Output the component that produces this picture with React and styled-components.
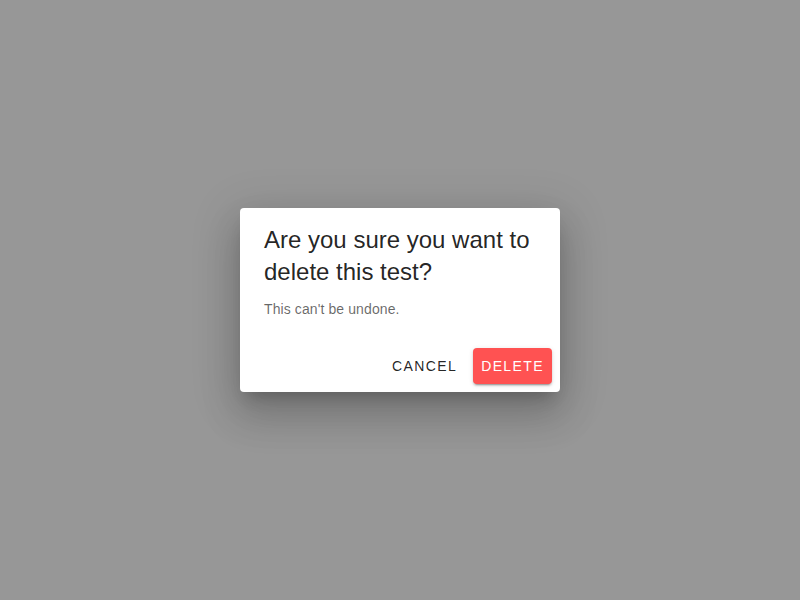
import React from "react";
import styled, { createGlobalStyle } from "styled-components";

const GlobalStyle = createGlobalStyle`
  html, body {
    margin: 0;
    height: 100%;
  }
  body {
    font-family: "Liberation Sans", Arial, sans-serif;
  }
  #root {
    height: 100%;
  }
`;

const Backdrop = styled.div`
  width: 100%;
  height: 100vh;
  background: #979797;
  display: flex;
  align-items: center;
  justify-content: center;
`;

const Dialog = styled.div`
  width: 320px;
  background: #fff;
  border-radius: 4px;
  box-shadow: 0px 11px 15px -7px rgba(0, 0, 0, 0.2),
    0px 24px 38px 3px rgba(0, 0, 0, 0.14),
    0px 9px 46px 8px rgba(0, 0, 0, 0.12);
  display: flex;
  flex-direction: column;
`;

const Title = styled.h2`
  margin: 0;
  padding: 16px 24px 11px;
  font-size: 24px;
  font-weight: 400;
  line-height: 32px;
  color: rgba(0, 0, 0, 0.87);
`;

const Content = styled.p`
  margin: 0;
  padding: 0 24px 21px;
  font-size: 14px;
  line-height: 20px;
  letter-spacing: 0.1px;
  color: rgba(0, 0, 0, 0.6);
`;

const Actions = styled.div`
  display: flex;
  justify-content: flex-end;
  align-items: center;
  gap: 8px;
  padding: 8px;
`;

const Button = styled.button`
  height: 36px;
  padding: 0 8px;
  border: none;
  border-radius: 4px;
  font-family: inherit;
  font-size: 14px;
  font-weight: 400;
  letter-spacing: 1.4px;
  text-transform: uppercase;
  cursor: pointer;
  color: ${({ $primary }) => ($primary ? "#fff" : "rgba(0, 0, 0, 0.87)")};
  background: ${({ $primary }) => ($primary ? "#ff5252" : "transparent")};
  box-shadow: ${({ $primary }) =>
    $primary
      ? "0px 3px 1px -2px rgba(0,0,0,0.2), 0px 2px 2px 0px rgba(0,0,0,0.14), 0px 1px 5px 0px rgba(0,0,0,0.12)"
      : "none"};
`;

export default function App() {
  return (
    <>
      <GlobalStyle />
      <Backdrop>
        <Dialog>
          <Title>Are you sure you want to delete this test?</Title>
          <Content>This can't be undone.</Content>
          <Actions>
            <Button>Cancel</Button>
            <Button $primary>Delete</Button>
          </Actions>
        </Dialog>
      </Backdrop>
    </>
  );
}
